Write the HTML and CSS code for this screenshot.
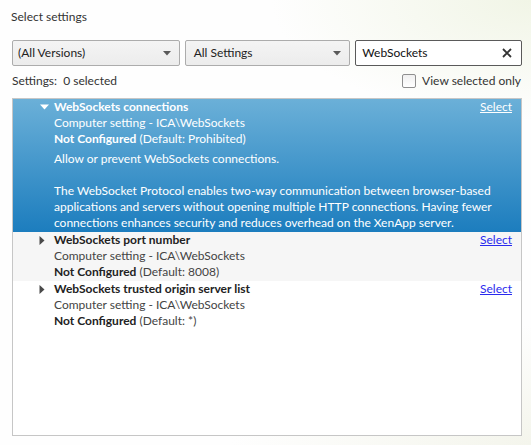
FILE: index.html
```html
<!DOCTYPE html>
<html>
<head>
<meta charset="utf-8">
<link rel="stylesheet" href="styles.css">
</head>
<body>
<div class="page">
  <div class="heading">Select settings</div>
  <div class="filters">
    <div class="dropdown dd-versions"><span>(All Versions)</span>
      <svg class="dd-arrow" width="8" height="5" viewBox="0 0 8 5"><path d="M0 0H8L4 4.5Z" fill="#5a5a5a"/></svg>
    </div>
    <div class="dropdown dd-settings"><span>All Settings</span>
      <svg class="dd-arrow" width="8" height="5" viewBox="0 0 8 5"><path d="M0 0H8L4 4.5Z" fill="#5a5a5a"/></svg>
    </div>
    <div class="search"><span>WebSockets</span>
      <svg class="clear" width="10" height="10" viewBox="0 0 10 10"><path d="M1 1L9 9M9 1L1 9" stroke="#333" stroke-width="1.8"/></svg>
    </div>
  </div>
  <div class="status">
    <span>Settings:&nbsp; 0 selected</span>
    <label class="viewsel"><span class="checkbox"></span>View selected only</label>
  </div>
  <div class="list">
    <div class="row selected">
      <div class="toggle"><svg width="9" height="6" viewBox="0 0 9 6"><path d="M0 0.5H9L4.5 5.5Z" fill="#fff"/></svg></div>
      <div class="content">
        <div class="head"><span class="name">WebSockets connections</span><a class="select" href="#">Select</a></div>
        <div class="path">Computer setting - ICA\WebSockets</div>
        <div class="state"><b>Not Configured</b> (Default: Prohibited)</div>
        <div class="desc">Allow or prevent WebSockets connections.<br><br>The WebSocket Protocol enables two-way communication between browser-based applications and servers without opening multiple HTTP connections. Having fewer connections enhances security and reduces overhead on the XenApp server.</div>
      </div>
    </div>
    <div class="row alt">
      <div class="toggle"><svg width="6" height="9" viewBox="0 0 6 9"><path d="M0.5 0V9L5.5 4.5Z" fill="#4a4a4a"/></svg></div>
      <div class="content">
        <div class="head"><span class="name">WebSockets port number</span><a class="select" href="#">Select</a></div>
        <div class="path">Computer setting - ICA\WebSockets</div>
        <div class="state"><b>Not Configured</b> (Default: 8008)</div>
      </div>
    </div>
    <div class="row">
      <div class="toggle"><svg width="6" height="9" viewBox="0 0 6 9"><path d="M0.5 0V9L5.5 4.5Z" fill="#4a4a4a"/></svg></div>
      <div class="content">
        <div class="head"><span class="name">WebSockets trusted origin server list</span><a class="select" href="#">Select</a></div>
        <div class="path">Computer setting - ICA\WebSockets</div>
        <div class="state"><b>Not Configured</b> (Default: *)</div>
      </div>
    </div>
  </div>
</div>
</body>
</html>
```
FILE: styles.css
```css
html, body {
  margin: 0;
  height: 100%;
}
body {
  font-family: Lato, "Noto Sans", sans-serif;
  font-size: 12px;
  line-height: 16px;
  color: #222;
  background:
    radial-gradient(ellipse 260px 120px at 100% 0%, #f1f5e6 0%, rgba(255,255,255,0) 100%),
    radial-gradient(ellipse 300px 120px at 100% 100%, #f4f5ec 0%, rgba(255,255,255,0) 100%),
    #fefefe;
  width: 531px;
  height: 445px;
  overflow: hidden;
}
.page {
  padding: 9px 9px 0 12px;
}
.heading {
  margin-left: -1px;
  color: #333;
}
.filters {
  display: flex;
  gap: 5px;
  margin-top: 15px;
  height: 26px;
}
.dropdown, .search {
  box-sizing: border-box;
  height: 26px;
  border-radius: 2px;
  display: flex;
  align-items: center;
  justify-content: space-between;
  padding: 0 8px 0 5px;
}
.dropdown {
  border: 1px solid #acacac;
  background: linear-gradient(#f4f4f4, #ececec);
}
.dd-versions { width: 168px; }
.dd-settings { width: 166px; padding-left: 8px; }
.search {
  width: 167px;
  border: 1px solid #5a5a5a;
  background: #fff;
  padding-left: 6px;
  padding-right: 9px;
  color: #111;
}
.status {
  display: flex;
  justify-content: space-between;
  align-items: center;
  margin-top: 7px;
  color: #333;
}
.viewsel {
  display: flex;
  align-items: center;
  gap: 6px;
  color: #333;
  margin-right: 1px;
}
.checkbox {
  width: 12px;
  height: 12px;
  border: 1px solid #8f8f8f;
  border-radius: 2px;
  background: linear-gradient(#f0f0f0, #fff);
}
.list {
  box-sizing: border-box;
  margin-top: 9px;
  width: 510px;
  height: 338px;
  border: 1px solid #c6c6c6;
  background: #fff;
}
.row {
  display: flex;
  padding-bottom: 1px;
  color: #444;
}
.row.alt {
  background: #f6f6f6;
}
.row.selected {
  background: linear-gradient(#6bb0d8, #1c7dbe);
  color: #fff;
}
.toggle {
  width: 41px;
  display: flex;
  justify-content: flex-end;
  padding-right: 5px;
  box-sizing: border-box;
  padding-top: 5px;
}
.row:not(.selected) .toggle {
  padding-right: 9px;
  padding-top: 4px;
}
.content {
  flex: 1;
  padding-right: 9px;
}
.head {
  display: flex;
  justify-content: space-between;
}
.name {
  font-weight: bold;
  color: #222;
}
.state b {
  color: #222;
}
.selected .name, .selected .state b {
  color: #fff;
}
.desc {
  margin-top: 4px;
}
.select {
  color: #2a2aee;
  text-decoration: underline;
}
.selected .select {
  color: #fff;
}
```
